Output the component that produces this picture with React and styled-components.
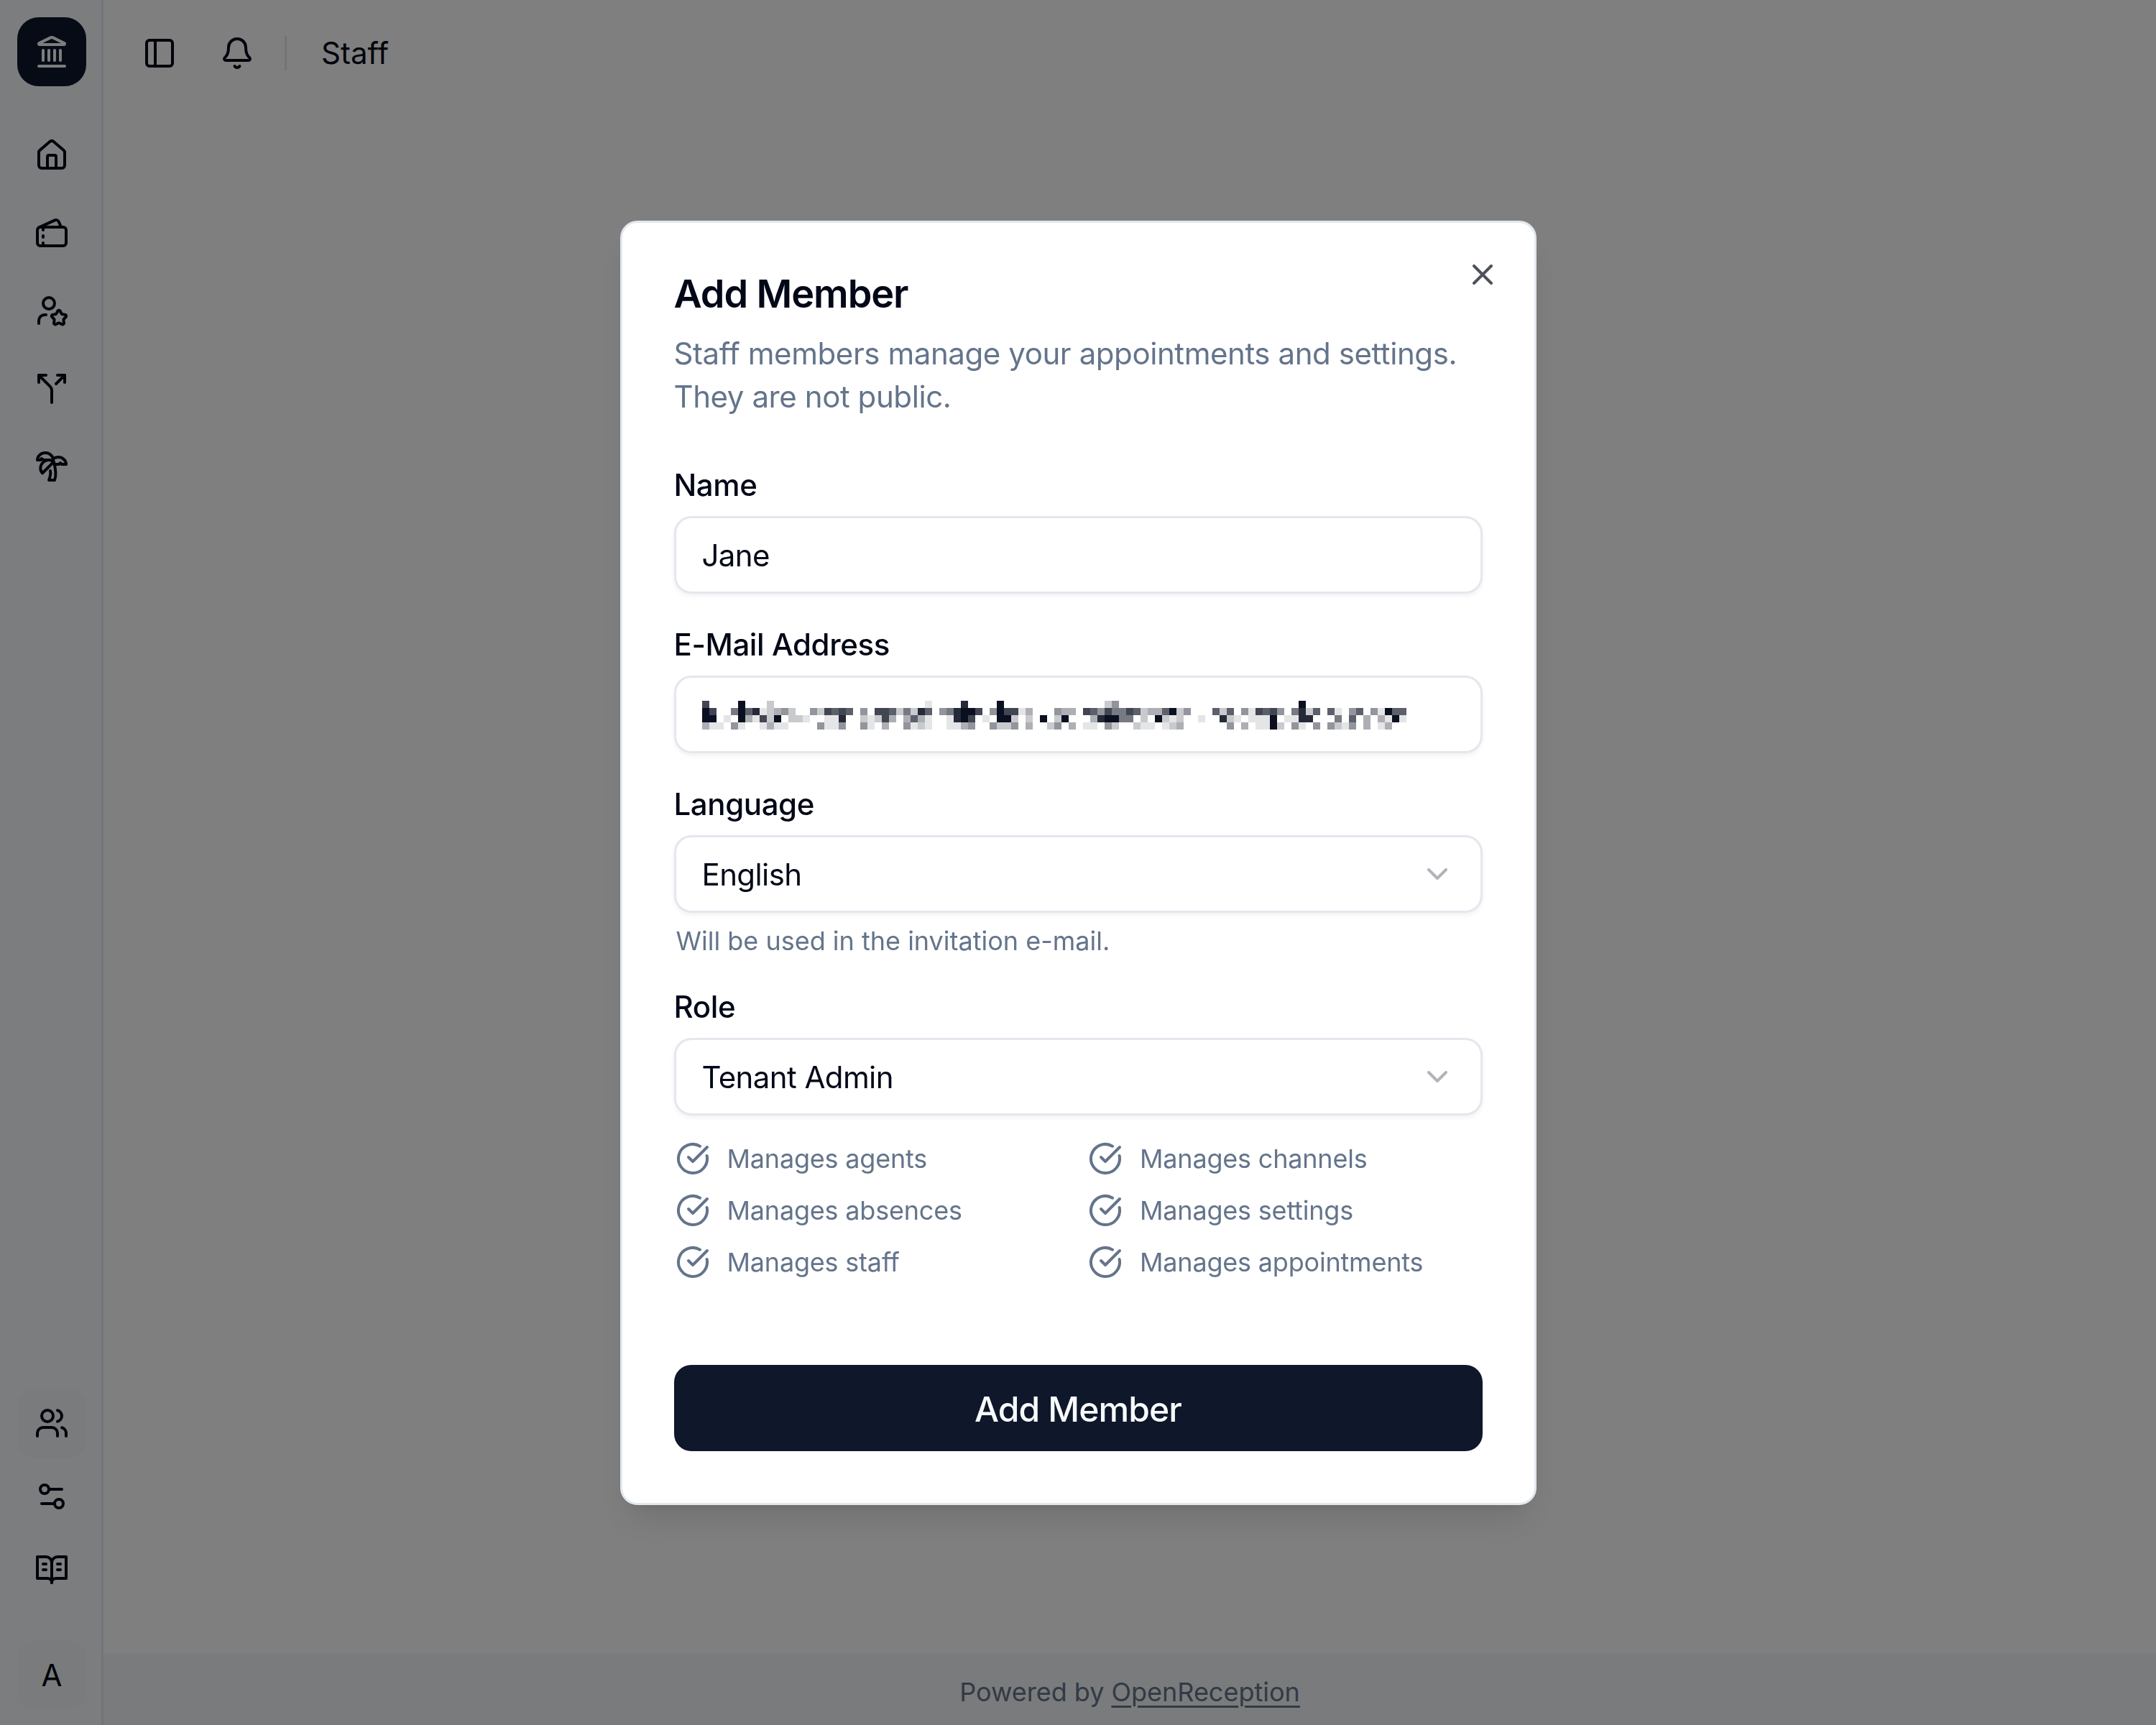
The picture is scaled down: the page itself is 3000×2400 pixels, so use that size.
import React from 'react';
import styled, { createGlobalStyle } from 'styled-components';
import {
  Landmark, House, Tickets, UserStar, Split, TreePalm, Users, Settings2,
  PanelLeft, Bell, X, ChevronDown, CircleCheckBig,
} from 'lucide-react';

const GlobalStyle = createGlobalStyle`
  html, body { margin: 0; padding: 0; background: #fff; }
  body { font-family: Inter, "Noto Sans", sans-serif; color: #020817; }
  * { box-sizing: border-box; }
`;

const Shell = styled.div`
  display: flex;
  width: 3000px;
  height: 2400px;
  overflow: hidden;
`;

const Sidebar = styled.aside`
  width: 144px;
  flex: none;
  display: flex;
  flex-direction: column;
  justify-content: space-between;
  align-items: center;
  padding: 24px 0 22px 3px;
  background: #f8fafc;
  border-right: 3px solid #e2e8f0;
`;

const SideGroup = styled.div`
  display: flex;
  flex-direction: column;
  align-items: center;
  gap: ${(p) => p.$gap}px;
`;

const LogoBox = styled.div`
  width: 96px;
  height: 96px;
  margin-bottom: 36px;
  border-radius: 30px;
  background: #0f172a;
  color: #f8fafc;
  display: flex;
  align-items: center;
  justify-content: center;
`;

const NavButton = styled.div`
  width: 96px;
  height: 96px;
  margin-top: ${(p) => p.$offset || 0}px;
  border-radius: 24px;
  display: flex;
  align-items: center;
  justify-content: center;
  font-size: 42px;
  color: #020817;
  background: ${(p) => (p.$active ? '#f5f7f9' : 'transparent')};
`;

const Main = styled.div`
  flex: 1;
  display: flex;
  flex-direction: column;
`;

const Topbar = styled.header`
  height: 148px;
  display: flex;
  align-items: center;
  padding-left: 36px;
`;

const IconButton = styled.div`
  width: 84px;
  height: 84px;
  display: flex;
  align-items: center;
  justify-content: center;
  margin-right: ${(p) => p.$mr || 0}px;
`;

const Separator = styled.div`
  width: 3px;
  height: 48px;
  margin: 0 48px 0 24px;
  background: #e2e8f0;
`;

const PageTitle = styled.span`
  font-size: 42px;
  line-height: 60px;
`;

const Content = styled.main`
  flex: 1;
`;

const Footer = styled.footer`
  height: 99px;
  display: flex;
  align-items: center;
  justify-content: center;
  padding-top: 6px;
  background: #f4f6f8;
  font-size: 36px;
  color: #64748b;
`;

const FooterLink = styled.a`
  margin-left: 10px;
  color: #64748b;
  text-decoration: underline;
  text-underline-offset: 6px;
  text-decoration-thickness: 3px;
`;

const Overlay = styled.div`
  position: fixed;
  inset: 0;
  background: rgba(0, 0, 0, 0.5);
  display: flex;
  align-items: center;
  justify-content: center;
`;

const Dialog = styled.div`
  position: relative;
  width: 1275px;
  padding: 72px;
  background: #fff;
  border: 3px solid #e2e8f0;
  border-radius: 24px;
  box-shadow: 0 30px 45px -9px rgba(0, 0, 0, 0.1), 0 12px 18px -12px rgba(0, 0, 0, 0.1);
`;

const CloseButton = styled.div`
  position: absolute;
  top: 48px;
  right: 48px;
  width: 48px;
  height: 48px;
  color: #020817;
  opacity: 0.7;
`;

const Title = styled.h2`
  margin: 0;
  font-size: 54px;
  line-height: 54px;
  font-weight: 600;
  letter-spacing: -1.1px;
`;

const Description = styled.p`
  margin: 26px 0 70px;
  font-size: 42px;
  line-height: 60px;
  letter-spacing: -0.42px;
  color: #64748b;
`;

const Form = styled.div`
  display: flex;
  flex-direction: column;
  gap: 48px;
`;

const Field = styled.div`
  display: flex;
  flex-direction: column;
`;

const Label = styled.label`
  padding-top: 2px;
  font-size: 42px;
  line-height: 42px;
  font-weight: 500;
  letter-spacing: -0.4px;
  margin-bottom: 22px;
`;

const Control = styled.div`
  height: 108px;
  padding: 2px 36px 0;
  display: flex;
  align-items: center;
  justify-content: space-between;
  background: #fff;
  border: 3px solid #e4e7ee;
  border-radius: 24px;
  box-shadow: 0 3px 6px rgba(15, 23, 42, 0.06);
  font-size: 42px;
  letter-spacing: -0.6px;
  color: #020817;
`;

const Chevron = styled(ChevronDown)`
  margin-top: -2px;
  opacity: 0.3;
`;

const Mosaic = styled.svg`
  display: block;
  shape-rendering: crispEdges;
`;

const Help = styled.p`
  margin: 18px 0 0 3px;
  font-size: 36px;
  line-height: 42px;
  color: #64748b;
`;

const PermissionGrid = styled.ul`
  list-style: none;
  margin: 24px 0 0;
  padding: 0;
  display: grid;
  grid-template-columns: 1fr 1fr;
  column-gap: 24px;
`;

const Permission = styled.li`
  height: 72px;
  padding-left: 2px;
  display: flex;
  align-items: center;
  gap: 24px;
  font-size: 36px;
  letter-spacing: -0.2px;
  color: #64748b;
`;

const SubmitButton = styled.button`
  display: block;
  width: 100%;
  height: 120px;
  margin-top: 107px;
  padding: 3px 0 0;
  border: 0;
  border-radius: 24px;
  background: #0f172a;
  color: #f8fafc;
  font-family: inherit;
  font-size: 48px;
  font-weight: 500;
  letter-spacing: -0.9px;
`;

// redacted e-mail, each cell is 10px: [row of col:darkness pairs]
const seg = (offset, s) =>
  s.split(' ').map((pair) => {
    const [c, v] = pair.split(':').map(Number);
    return [c + offset, v];
  });

const mosaicRows = [
  [...seg(0, '0:7 5:9 9:2 31:1'), ...seg(33, '3:8 8:9 23:2 24:4'), ...seg(66, '17:9')],
  [
    ...seg(0, '0:9 1:7 4:5 5:9 6:6 7:8 8:1 9:2 10:3 11:4 12:2 15:4 16:2 17:7 18:6 19:7 20:6 22:4 24:7 25:7 26:6 27:2 28:5 29:2 30:8 31:6'),
    ...seg(33, '0:4 1:5 2:8 3:9 4:9 5:7 7:4 8:9 9:7 10:7 11:1 12:3 16:4 17:3 18:3 20:7 21:6 22:4 23:7 24:5 25:5 26:7 27:6 28:2 29:3 30:3 31:6 32:9'),
    ...seg(66, '0:2 1:4 5:6 6:2 7:6 9:4 10:1 11:7 12:6 13:7 14:4 16:5 17:8 18:2 19:6 21:6 22:1 24:4 25:6 27:4 28:1 29:9 30:6 31:6'),
  ],
  [
    ...seg(0, '0:9 1:9 3:1 5:9 6:3 7:1 8:7 9:2 10:9 12:2 13:2 14:1 17:1 18:1 19:8 22:2 23:1 24:2 25:7 26:3 28:3 29:6 30:3 31:1'),
    ...seg(33, '1:1 2:8 3:9 4:7 6:1 8:9 9:9 10:2 12:2 14:9 16:2 17:9 21:3 22:8 23:9 24:9 25:5 26:5 28:2 30:9 31:2 32:1'),
    ...seg(66, '0:2 3:1 6:8 7:2 8:1 10:1 11:1 12:1 13:9 15:1 16:1 17:8 18:8 22:5 24:6 26:3 28:3 29:1 30:9 31:1'),
  ],
  [
    ...seg(0, '0:3 1:1 2:1 4:4 5:1 8:1 9:3 10:1 11:1 16:4 17:1 18:1 19:4 22:4 23:1 25:3 28:4 29:1 30:2 31:1'),
    ...seg(33, '1:1 2:1 3:3 4:4 7:4 8:2 9:2 10:4 12:3 15:2 16:4 18:3 20:1 21:1 23:4 24:2 27:2 28:1 29:1 31:1 32:2'),
    ...seg(66, '0:3 7:4 9:3 11:1 12:1 13:9 14:2 16:4 17:1 19:4 21:4 22:2 23:1 24:4 26:3 28:1 29:3'),
  ],
];

function RedactedEmail() {
  return (
    <Mosaic width="980" height="40" viewBox="0 0 980 40" aria-hidden="true">
      {mosaicRows.map((row, y) =>
        row.map(([x, v]) => (
          <rect key={`${x}-${y}`} x={x * 10} y={y * 10} width="10" height="10" fill="#0b1020" fillOpacity={v / 9} />
        ))
      )}
    </Mosaic>
  );
}

// older lucide book-open-text, the current package draws it differently
function BookIcon() {
  return (
    <svg width="48" height="48" viewBox="0 0 24 24" fill="none" stroke="currentColor" strokeWidth="2" strokeLinecap="round" strokeLinejoin="round">
      <path d="M2 3h6a4 4 0 0 1 4 4v14a3 3 0 0 0-3-3H2z" />
      <path d="M22 3h-6a4 4 0 0 0-4 4v14a3 3 0 0 1 3-3h7z" />
      <path d="M6 8h2" />
      <path d="M6 12h2" />
      <path d="M16 8h2" />
      <path d="M16 12h2" />
    </svg>
  );
}

const topNav = [House, Tickets, UserStar, Split, TreePalm];
const permissions = [
  'Manages agents',
  'Manages channels',
  'Manages absences',
  'Manages settings',
  'Manages staff',
  'Manages appointments',
];

export default function App() {
  return (
    <>
      <GlobalStyle />
      <Shell>
        <Sidebar>
          <SideGroup $gap={12}>
            <LogoBox>
              <Landmark size={48} />
            </LogoBox>
            {topNav.map((Icon, i) => (
              <NavButton key={i}>
                <Icon size={48} />
              </NavButton>
            ))}
          </SideGroup>
          <SideGroup $gap={6}>
            <NavButton $active><Users size={48} /></NavButton>
            <NavButton><Settings2 size={48} /></NavButton>
            <NavButton><BookIcon /></NavButton>
            <NavButton $active $offset={44}>A</NavButton>
          </SideGroup>
        </Sidebar>
        <Main>
          <Topbar>
            <IconButton $mr={24}><PanelLeft size={48} /></IconButton>
            <IconButton><Bell size={48} /></IconButton>
            <Separator />
            <PageTitle>Staff</PageTitle>
          </Topbar>
          <Content />
          <Footer>
            Powered by<FooterLink>OpenReception</FooterLink>
          </Footer>
        </Main>
      </Shell>
      <Overlay>
        <Dialog>
          <CloseButton><X size={48} /></CloseButton>
          <Title>Add Member</Title>
          <Description>
            Staff members manage your appointments and settings. They are not public.
          </Description>
          <Form>
            <Field>
              <Label>Name</Label>
              <Control>Jane</Control>
            </Field>
            <Field>
              <Label>E-Mail Address</Label>
              <Control><RedactedEmail /></Control>
            </Field>
            <Field>
              <Label>Language</Label>
              <Control>English<Chevron size={48} /></Control>
              <Help>Will be used in the invitation e-mail.</Help>
            </Field>
            <Field>
              <Label>Role</Label>
              <Control>Tenant Admin<Chevron size={48} /></Control>
              <PermissionGrid>
                {permissions.map((text) => (
                  <Permission key={text}>
                    <CircleCheckBig size={48} />
                    {text}
                  </Permission>
                ))}
              </PermissionGrid>
            </Field>
          </Form>
          <SubmitButton>Add Member</SubmitButton>
        </Dialog>
      </Overlay>
    </>
  );
}
